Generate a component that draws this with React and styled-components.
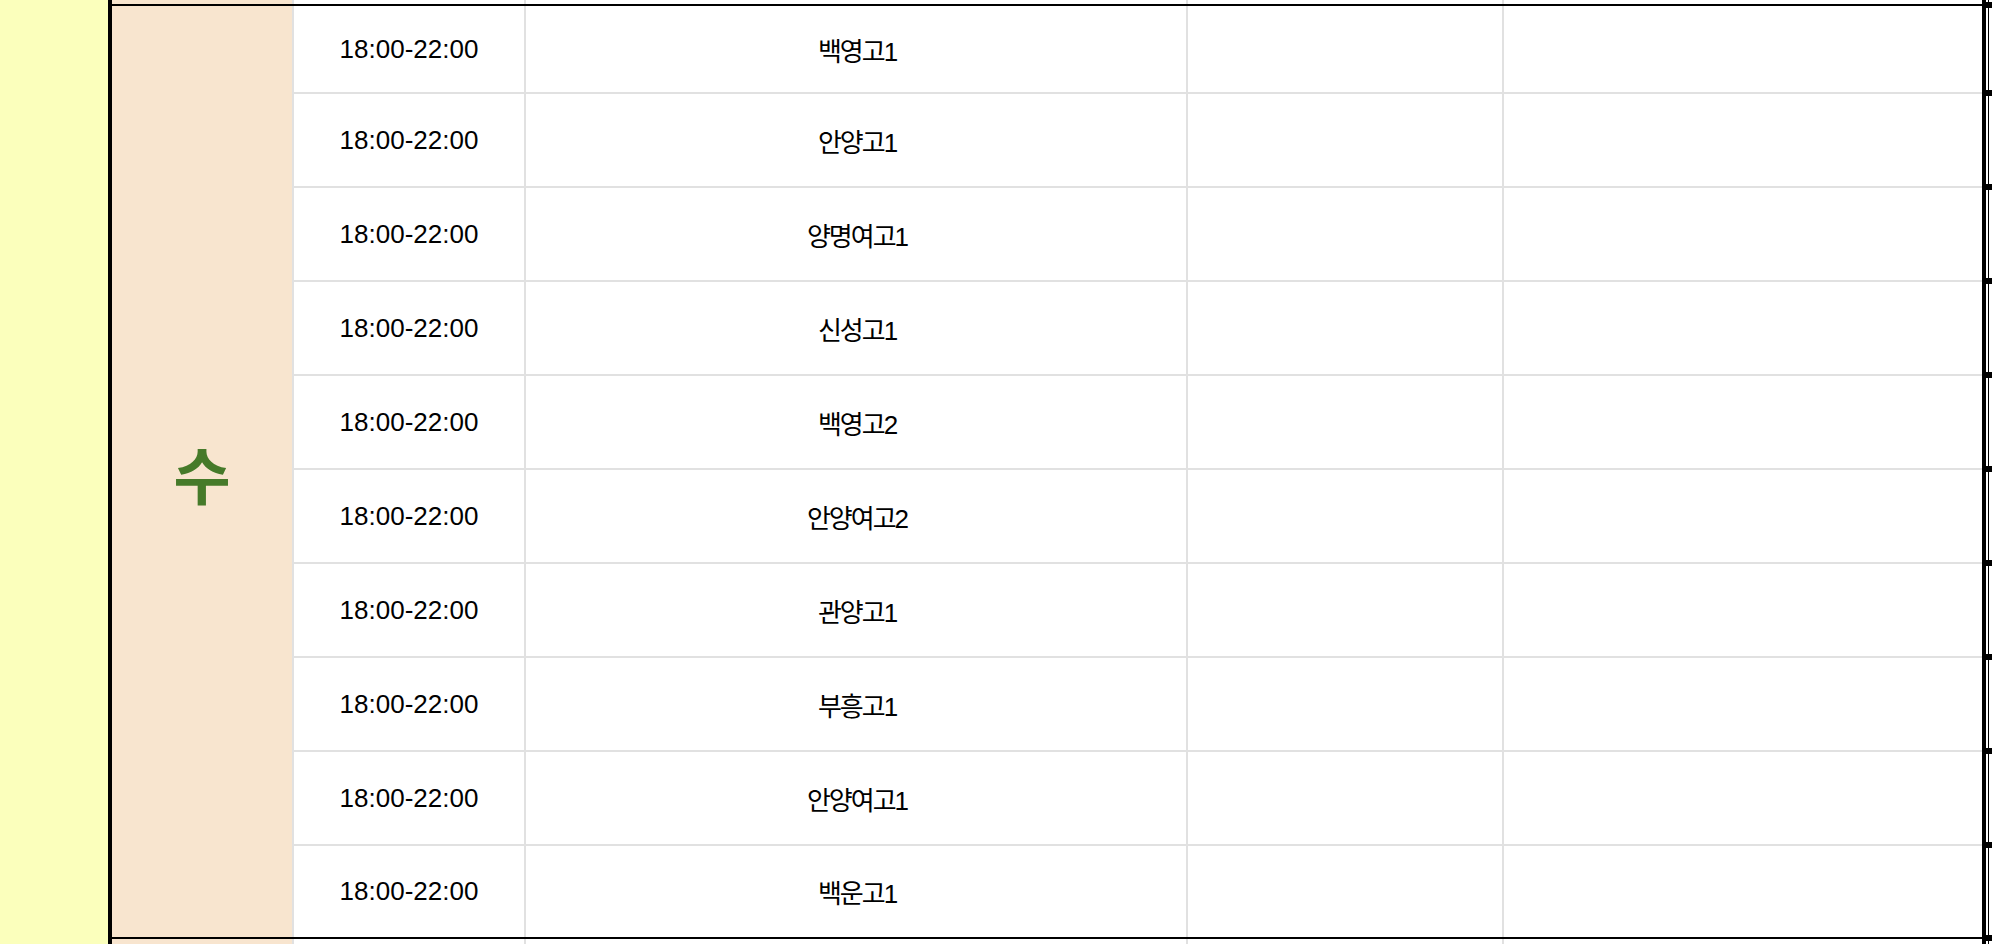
import React from "react";
import styled, { createGlobalStyle } from "styled-components";

const GlobalStyle = createGlobalStyle`
  html, body { margin: 0; padding: 0; background: #ffffff; }
  body { font-family: "Liberation Sans", "Noto Sans CJK KR", Arial, sans-serif; }
`;

const GRID_LINE = "#e1e1e1";
const COLS = "180px 232px 662px 316px 480px";

const Page = styled.div`
  display: flex;
  width: 1992px;
  height: 944px;
  overflow: hidden;
  background: #ffffff;
`;

const YellowStrip = styled.div`
  width: 108px;
  flex: none;
  background: #fbffbc;
`;

const Frame = styled.div`
  width: 1870px;
  flex: none;
  display: flex;
  flex-direction: column;
  border-left: 4px solid #000;
  border-right: 4px solid #000;
`;

const EdgeRow = styled.div`
  display: grid;
  grid-template-columns: ${COLS};
  height: ${(p) => p.$h}px;
  flex: none;
`;

const Block = styled.div`
  display: grid;
  grid-template-columns: ${COLS};
  grid-template-rows: 86px repeat(8, 94px) 93px;
  border-top: 2px solid #000;
  border-bottom: 2px solid #000;
  flex: none;
`;

const DayCell = styled.div`
  grid-column: 1;
  grid-row: ${(p) => (p.$span ? `1 / span ${p.$span}` : "auto")};
  background: #f8e5cf;
  display: flex;
  align-items: center;
  justify-content: center;
`;

const DayLabel = styled.span`
  font-family: "Noto Sans CJK KR", sans-serif;
  font-weight: 700;
  font-size: 62px;
  line-height: 1;
  color: #467a2a;
  transform: translateY(1px);
`;

const Cell = styled.div`
  border-left: 2px solid ${GRID_LINE};
  border-top: ${(p) => (p.$first ? "none" : `2px solid ${GRID_LINE}`)};
  background: #ffffff;
  display: flex;
  align-items: center;
  justify-content: center;
  font-size: 26px;
  color: #000;
  white-space: nowrap;
`;

const TimeText = styled.span`
  font-family: "Liberation Sans", Arial, sans-serif;
  font-size: 26px;
`;

const SchoolText = styled.span`
  font-family: "Liberation Sans", "Noto Sans CJK KR", sans-serif;
  font-size: 26px;
  letter-spacing: -2px;
  margin-right: -2px;
`;

const NextCol = styled.div`
  width: 6px;
  flex: none;
  display: flex;
  flex-direction: column;
`;

const NextSeg = styled.div`
  height: ${(p) => p.$h}px;
  flex: none;
  position: relative;
  &::before {
    content: "";
    position: absolute;
    left: 2px;
    top: 0;
    bottom: 0;
    width: 1px;
    background: #000;
  }
`;

const NextStub = styled.div`
  height: ${(p) => p.$h}px;
  flex: none;
  background: #000;
`;

const schools = [
  "백영고1",
  "안양고1",
  "양명여고1",
  "신성고1",
  "백영고2",
  "안양여고2",
  "관양고1",
  "부흥고1",
  "안양여고1",
  "백운고1",
];

const lines = [4, 92, 186, 280, 374, 468, 562, 656, 750, 844, 937];

function NextColumn() {
  const parts = [];
  let y = 0;
  lines.forEach((ly, i) => {
    const stubTop = ly - 2;
    if (stubTop > y) parts.push(<NextSeg key={`s${i}`} $h={stubTop - y} />);
    parts.push(<NextStub key={`b${i}`} $h={6} />);
    y = stubTop + 6;
  });
  if (y < 944) parts.push(<NextSeg key="end" $h={944 - y} />);
  return <NextCol>{parts}</NextCol>;
}

function EdgeCells() {
  return (
    <>
      <DayCell />
      <Cell $first />
      <Cell $first />
      <Cell $first />
      <Cell $first />
    </>
  );
}

export default function App() {
  return (
    <>
      <GlobalStyle />
      <Page>
        <YellowStrip />
        <Frame>
          <EdgeRow $h={4}>
            <EdgeCells />
          </EdgeRow>
          <Block>
            <DayCell $span={10}>
              <DayLabel>수</DayLabel>
            </DayCell>
            {schools.map((s, i) => (
              <React.Fragment key={i}>
                <Cell $first={i === 0}>
                  <TimeText>18:00-22:00</TimeText>
                </Cell>
                <Cell $first={i === 0}>
                  <SchoolText>{s}</SchoolText>
                </Cell>
                <Cell $first={i === 0} />
                <Cell $first={i === 0} />
              </React.Fragment>
            ))}
          </Block>
          <EdgeRow $h={5}>
            <EdgeCells />
          </EdgeRow>
        </Frame>
        <NextColumn />
      </Page>
    </>
  );
}
